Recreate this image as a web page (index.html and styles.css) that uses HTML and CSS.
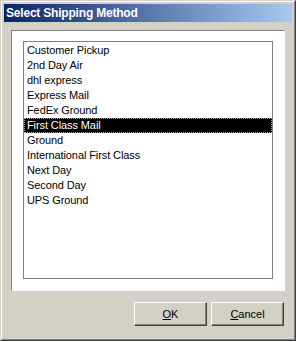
FILE: index.html
```html
<!DOCTYPE html>
<html lang="en">
<head>
    <meta charset="UTF-8">
    <title>Select Shipping Method</title>
    <link rel="stylesheet" href="styles.css">
</head>
<body>
    <div class="window">
        <div class="frame">
            <div class="titlebar">Select Shipping Method</div>
            <div class="content">
                <div class="panel">
                    <ul class="list">
                        <li>Customer Pickup</li>
                        <li>2nd Day Air</li>
                        <li>dhl express</li>
                        <li>Express Mail</li>
                        <li>FedEx Ground</li>
                        <li class="selected">First Class Mail</li>
                        <li>Ground</li>
                        <li>International First Class</li>
                        <li>Next Day</li>
                        <li>Second Day</li>
                        <li>UPS Ground</li>
                    </ul>
                </div>
                <div class="buttons">
                    <button><u>O</u>K</button>
                    <button><u>C</u>ancel</button>
                </div>
            </div>
        </div>
    </div>
</body>
</html>
```
FILE: styles.css
```css
body {
    margin: 0;
    background: #ffffff;
    font-family: "Liberation Sans", Arial, sans-serif;
    font-size: 11px;
}
.window {
    width: 296px;
    height: 341px;
    box-sizing: border-box;
    border: 1px solid;
    border-color: #d4d0c8 #404040 #404040 #d4d0c8;
}
.frame {
    height: 100%;
    box-sizing: border-box;
    border: 1px solid;
    border-color: #ffffff #808080 #808080 #ffffff;
    background: #d4d0c8;
    padding: 2px;
    display: flex;
    flex-direction: column;
}
.titlebar {
    height: 18px;
    display: flex;
    align-items: center;
    padding-left: 2px;
    background: linear-gradient(to right, #0a246a, #a6caf0);
    color: #ffffff;
    font-weight: bold;
    font-size: 12px;
    letter-spacing: -0.2px;
}
.content {
    flex: 1;
    padding: 8px 7px 11px 7px;
    display: flex;
    flex-direction: column;
}
.panel {
    height: 261px;
    box-sizing: border-box;
    background: #ffffff;
    border: 1px solid;
    border-color: #808080 #ffffff #ffffff #808080;
    padding: 10px 11px 11px 11px;
    display: flex;
}
.list {
    flex: 1;
    margin: 0;
    padding: 1px 0 0 0;
    list-style: none;
    border: 1px solid #808080;
}
.list li {
    height: 15px;
    line-height: 15px;
    padding-left: 3px;
    color: #000000;
    white-space: nowrap;
    letter-spacing: -0.1px;
}
.list li.selected {
    background: #000000;
    color: #ffffff;
    outline: 1px dotted #a0a0a0;
    outline-offset: -1px;
}
.buttons {
    margin-top: 11px;
    display: flex;
    justify-content: flex-end;
    gap: 4px;
    padding-right: 1px;
}
.buttons button {
    width: 73px;
    height: 24px;
    padding: 0;
    font-family: "Liberation Sans", Arial, sans-serif;
    font-size: 11px;
    color: #000000;
    background: #d4d0c8;
    border: 1px solid;
    border-color: #ffffff #404040 #404040 #ffffff;
    box-shadow: inset -1px -1px 0 #808080;
}
```
